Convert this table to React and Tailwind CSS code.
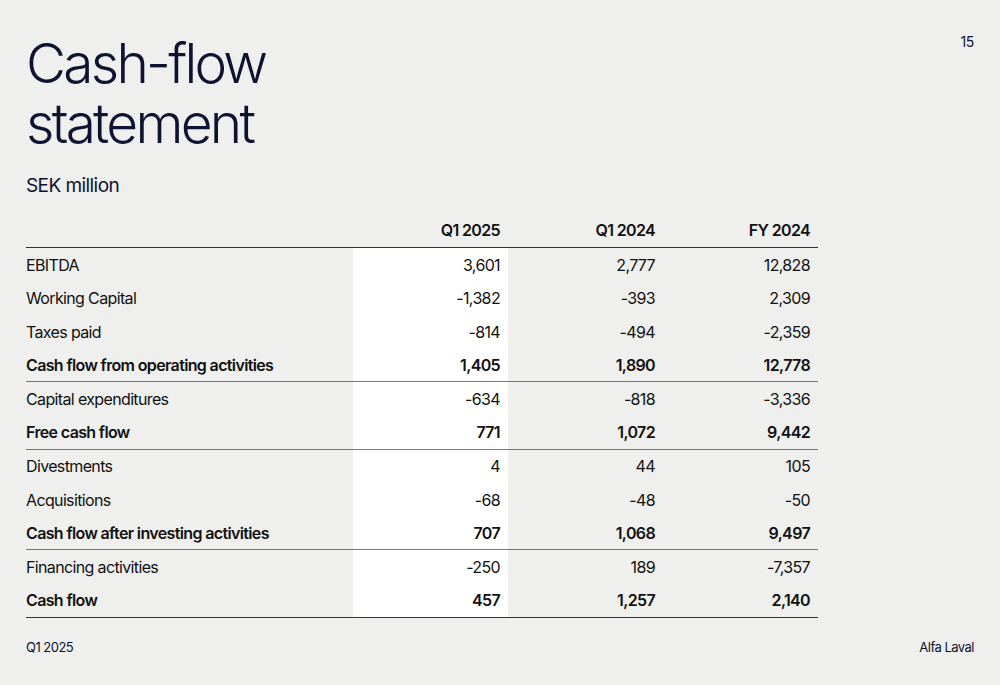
const ROWS = [
  { label: 'EBITDA', v: ['3,601', '2,777', '12,828'] },
  { label: 'Working Capital', v: ['-1,382', '-393', '2,309'] },
  { label: 'Taxes paid', v: ['-814', '-494', '-2,359'] },
  { label: 'Cash flow from operating activities', v: ['1,405', '1,890', '12,778'], bold: true, line: true },
  { label: 'Capital expenditures', v: ['-634', '-818', '-3,336'] },
  { label: 'Free cash flow', v: ['771', '1,072', '9,442'], bold: true, line: true },
  { label: 'Divestments', v: ['4', '44', '105'] },
  { label: 'Acquisitions', v: ['-68', '-48', '-50'] },
  { label: 'Cash flow after investing activities', v: ['707', '1,068', '9,497'], bold: true, line: true },
  { label: 'Financing activities', v: ['-250', '189', '-7,357'] },
  { label: 'Cash flow', v: ['457', '1,257', '2,140'], bold: true, last: true },
];

const App = () => {
  return (
    <div className="w-[1000px] h-[685px] bg-[#efefed] text-[#0d1330] flex flex-col px-[26px]" style={{ fontFamily: 'Inter, "Noto Sans", sans-serif' }}>
      <div className="flex justify-between pt-[33px]">
        <h1 className="text-[55px] leading-[60px] font-light tracking-[-0.05em]">Cash-flow<br />statement</h1>
        <span className="text-[14px] -mt-[2px] tracking-tight">15</span>
      </div>

      <div className="text-[19px] tracking-[-0.03em] mt-[21px] leading-[24px]">SEK million</div>

      <div className="w-[792px] mt-[15px] text-[16px] tracking-[-0.04em] text-[#111]">
        <div className="grid grid-cols-[327px_155px_155px_155px] h-[35px] items-center border-b-[1.5px] border-[#333] font-semibold">
          <div />
          <div className="text-right pr-[8px]">Q1 2025</div>
          <div className="text-right pr-[8px]">Q1 2024</div>
          <div className="text-right pr-[8px]">FY 2024</div>
        </div>
        {ROWS.map((r) => (
          <div key={r.label}
            className={`grid grid-cols-[327px_155px_155px_155px] h-[33.6px] items-stretch ${r.bold ? 'font-semibold' : 'font-normal'} ${r.line ? 'border-b border-[#777]' : ''} ${r.last ? 'border-b-[1.5px] border-[#333]' : ''}`}>
            <div className="flex items-center">{r.label}</div>
            <div className="flex items-center justify-end pr-[8px] bg-white">{r.v[0]}</div>
            <div className="flex items-center justify-end pr-[8px]">{r.v[1]}</div>
            <div className="flex items-center justify-end pr-[8px]">{r.v[2]}</div>
          </div>
        ))}
      </div>

      <div className="flex justify-between mt-auto mb-[28px] text-[13px] tracking-[-0.04em]">
        <span>Q1 2025</span>
        <span>Alfa Laval</span>
      </div>
    </div>
  );
};

export default App;
